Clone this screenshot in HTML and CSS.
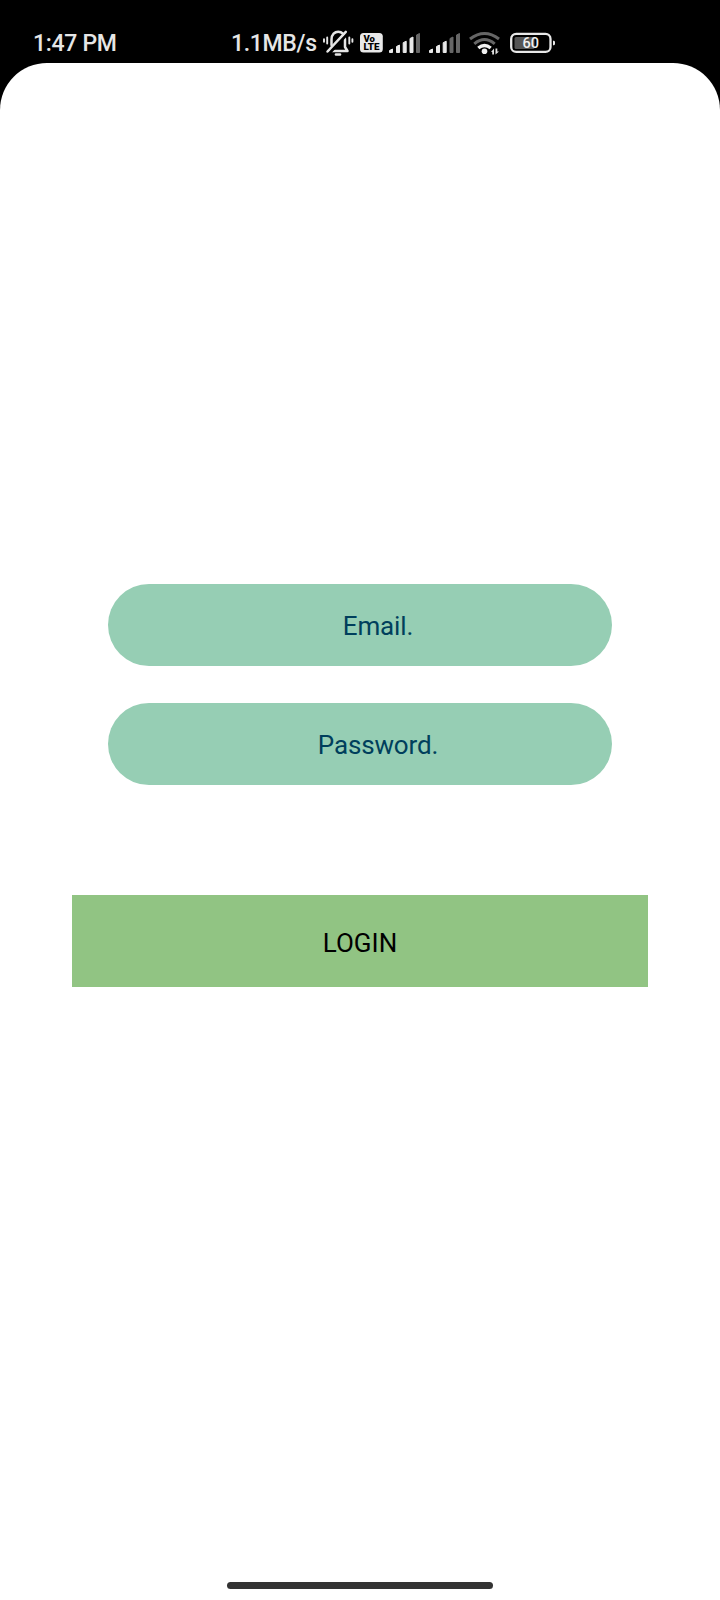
FILE: index.html
```html
<!DOCTYPE html>
<html lang="en">
<head>
<meta charset="utf-8">
<title>Login</title>
<link rel="stylesheet" href="styles.css">
</head>
<body>
<div class="phone">
  <header class="status">
    <span class="time">1:47 PM</span>
    <span class="speed">1.1MB/s</span>
    <svg class="icon" width="37" height="40" viewBox="0 0 37 40">
      <g fill="none" stroke="#e6e6e6" stroke-width="2.500" stroke-linecap="round" stroke-linejoin="round">
        <path d="M8.500 29H27.500L25 25V17.500C25 7 11.500 7 11.500 17.500V23"/>
        <path d="M9.500 31L28 11" stroke="#000" stroke-width="3"/>
        <path d="M7.500 29.500L25.800 9.800"/>
        <path d="M16 32.500H20" stroke-width="2.600"/>
        <path d="M7.200 15.500V21.500M4 17.200V19.800M29.300 15.500V21.500M32.400 17.200V19.800" stroke-width="1.900"/>
      </g>
    </svg>
    <svg class="icon" width="28" height="40" viewBox="0 0 28 40">
      <rect x="3" y="11" width="22.800" height="19.500" rx="3.500" fill="#e8e8e8"/>
      <text class="volte" x="6.500" y="19.500" textLength="11.500" lengthAdjust="spacingAndGlyphs">Vo</text>
      <text class="volte" x="6.500" y="28" textLength="16" lengthAdjust="spacingAndGlyphs">LTE</text>
    </svg>
    <svg class="icon" width="40" height="40" viewBox="0 0 40 40">
      <g class="bars">
        <path d="M4.500 28.500L7.500 27V30.500H4.500Z"/><path d="M11.500 24.500L14.500 23V30.500H11.500Z"/><path d="M18.200 20.700L21.200 19.200V30.500H18.200Z"/><path d="M25 16.500L28 15V30.500H25Z"/>
      </g>
      <path class="bars off" d="M31.500 13L34.500 11.500V30.500H31.500Z"/>
    </svg>
    <svg class="icon" width="40" height="40" viewBox="0 0 40 40">
      <g class="bars">
        <path d="M4.500 28.500L7.500 27V30.500H4.500Z"/><path d="M11.500 24.500L14.500 23V30.500H11.500Z"/><path d="M18.200 20.700L21.200 19.200V30.500H18.200Z"/>
      </g>
      <path class="bars off" d="M25 16.500L28 15V30.500H25ZM31.500 13L34.500 11.500V30.500H31.500Z"/>
    </svg>
    <svg class="icon" width="41" height="40" viewBox="0 0 41 40">
      <g fill="none" stroke-width="3">
        <path d="M5 17Q19.500 6 34 17M9.300 21.800Q19.500 13.300 29.700 21.800" stroke="#666"/>
        <path d="M13.300 26Q19.500 21 25.700 26" stroke="#f0f0f0" stroke-width="3.400"/>
      </g>
      <circle cx="19.500" cy="29.300" r="2.800" fill="#f0f0f0"/>
      <path d="M26 30L29 26.500V32.500H27.200V30ZM30.500 26.500H32.300V29.500H34L30.500 32.500Z" fill="#e0e0e0"/>
    </svg>
    <svg class="icon" width="54" height="40" viewBox="0 0 54 40">
      <rect x="5.200" y="11.900" width="39.300" height="18" rx="5" fill="none" stroke="#e8e8e8" stroke-width="2.300"/>
      <rect x="8.500" y="15" width="20" height="12" rx="1.500" fill="#555"/>
      <path d="M47.500 19Q48.500 19 48.500 20V22Q48.500 23 47.500 23Z" fill="#e8e8e8" stroke="#e8e8e8"/>
      <text class="level" x="24.700" y="26.300" text-anchor="middle">60</text>
    </svg>
  </header>
  <main class="screen">
    <div class="field">Email.</div>
    <div class="field">Password.</div>
    <div class="login">LOGIN</div>
  </main>
  <footer class="nav"><div class="handle"></div></footer>
</div>
</body>
</html>
```
FILE: styles.css
```css
body {
  margin: 0;
  background: #000;
  font-family: Roboto, sans-serif;
}

.phone {
  width: 720px;
  height: 1600px;
  display: flex;
  flex-direction: column;
  overflow: hidden;
}

.status {
  box-sizing: border-box;
  height: 63px;
  padding: 22px 0 0 33px;
  display: flex;
  align-items: flex-start;
  color: #e6e6e6;
  font-size: 23px;
  font-weight: 500;
  letter-spacing: -0.32px;
  line-height: 44px;
  white-space: nowrap;
}

.time {
  width: 198px;
}

.speed {
  width: 89px;
}

.icon {
  display: block;
  flex: none;
  letter-spacing: 0;
}

.bars {
  fill: #e8e8e8;
  stroke: #e8e8e8;
  stroke-width: 1px;
  stroke-linejoin: round;
}

.off {
  fill: #666;
  stroke: #666;
}

.volte {
  font-size: 9.5px;
  font-weight: 900;
  fill: #000;
}

.level {
  font-size: 14.5px;
  font-weight: 500;
  fill: #f0f0f0;
}

.screen {
  flex: 1;
  display: flex;
  flex-direction: column;
  align-items: center;
  padding-top: 521px;
  background: #fff;
  border-radius: 47px 47px 0 0;
}

.field {
  box-sizing: border-box;
  width: 504px;
  height: 82px;
  margin-bottom: 37px;
  padding-left: 36px;
  border-radius: 41px;
  background: #96ceb4;
  color: #003f5c;
  font-size: 26px;
  letter-spacing: -0.15px;
  line-height: 84px;
  text-align: center;
}

.login {
  width: 576px;
  height: 92px;
  margin-top: 73px;
  background: #91c483;
  color: #000;
  font-size: 26px;
  line-height: 96px;
  text-align: center;
}

.nav {
  height: 18px;
  display: flex;
  justify-content: center;
  background: #fff;
}

.handle {
  width: 266px;
  height: 7px;
  border-radius: 4px;
  background: #333;
}
```
